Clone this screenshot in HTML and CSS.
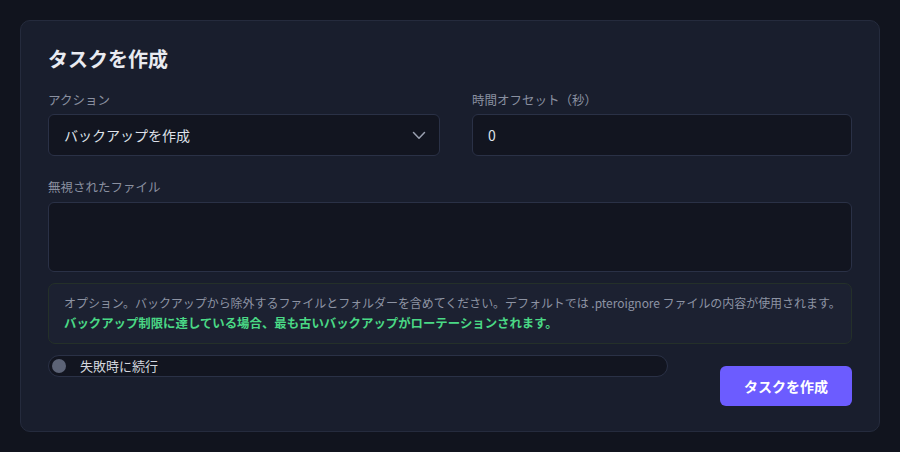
FILE: index.html
```html
<!DOCTYPE html>
<html lang="ja">
<head>
<meta charset="utf-8">
<link rel="stylesheet" href="styles.css">
</head>
<body>
<div class="card">
  <h2 class="title">タスクを作成</h2>
  <div class="row">
    <div class="field">
      <label class="label">アクション</label>
      <div class="select">
        <span>バックアップを作成</span>
        <svg class="chev" width="14" height="9" viewBox="0 0 14 9"><path d="M1.5 1.5 L7 7.2 L12.5 1.5" fill="none" stroke="#9aa0b0" stroke-width="1.5" stroke-linecap="round" stroke-linejoin="round"/></svg>
      </div>
    </div>
    <div class="field">
      <label class="label">時間オフセット（秒）</label>
      <div class="input">0</div>
    </div>
  </div>
  <div class="field files">
    <label class="label">無視されたファイル</label>
    <div class="textarea"></div>
  </div>
  <div class="info">
    <p class="info-text">オプション。バックアップから除外するファイルとフォルダーを含めてください。デフォルトでは .pteroignore ファイルの内容が使用されます。</p>
    <p class="info-warn">バックアップ制限に達している場合、最も古いバックアップがローテーションされます。</p>
  </div>
  <div class="bottom">
    <div class="toggle">
      <span class="knob"></span>
      <span class="toggle-label">失敗時に続行</span>
    </div>
    <button class="btn">タスクを作成</button>
  </div>
</div>
</body>
</html>
```
FILE: styles.css
```css
* { box-sizing: border-box; }
html, body {
  margin: 0;
  background: #11141e;
  font-family: "Noto Sans CJK JP", "Noto Sans", sans-serif;
}
body { padding: 20px; }
.card {
  background: #191e2d;
  border: 1px solid #252b3d;
  border-radius: 10px;
  padding: 25px 27px 25px 27px;
  height: 412px;
}
.title {
  margin: 0 0 19px;
  font-size: 20px;
  line-height: 26px;
  font-weight: 700;
  color: #e9ebf1;
}
.row {
  display: grid;
  grid-template-columns: 392px 1fr;
  column-gap: 32px;
}
.field { display: flex; flex-direction: column; }
.label {
  font-size: 12.5px;
  line-height: 18px;
  color: #8a90a0;
  margin-bottom: 5px;
}
.select, .input {
  height: 42px;
  border: 1px solid #2a3146;
  background: #121520;
  border-radius: 6px;
  display: flex;
  align-items: center;
  padding: 0 13px 0 15px;
  font-size: 14px;
  color: #dfe2ea;
}
.select { justify-content: space-between; }
.files { margin-top: 22px; }
.files .label { margin-bottom: 6px; }
.textarea {
  height: 70px;
  border: 1px solid #2a3146;
  background: #121520;
  border-radius: 6px;
}
.info {
  margin-top: 11px;
  border: 1px solid #243029;
  background: #1c2131;
  border-radius: 7px;
  padding: 8px 15px 9px;
}
.info p { margin: 0; line-height: 21px; white-space: nowrap; }
.info-text { color: #8d93a3; font-size: 12px; letter-spacing: -0.05px; }
.info-warn { color: #4ad885; font-weight: 700; font-size: 12.4px; }
.bottom {
  display: flex;
  justify-content: space-between;
  align-items: flex-start;
  margin-top: 11px;
}
.toggle {
  width: 620px;
  height: 22px;
  border: 1px solid #2a3146;
  background: #121520;
  border-radius: 11px;
  display: flex;
  align-items: center;
  padding-left: 3px;
}
.knob {
  width: 14px;
  height: 14px;
  border-radius: 50%;
  background: #5c6376;
}
.toggle-label {
  margin-left: 14px;
  font-size: 13px;
  color: #d4d7df;
  line-height: 18px;
}
.btn {
  margin-top: 11px;
  width: 132px;
  height: 40px;
  border: none;
  border-radius: 6px;
  background: #6c5cff;
  color: #ffffff;
  font-family: inherit;
  font-size: 14px;
  font-weight: 700;
}
```
